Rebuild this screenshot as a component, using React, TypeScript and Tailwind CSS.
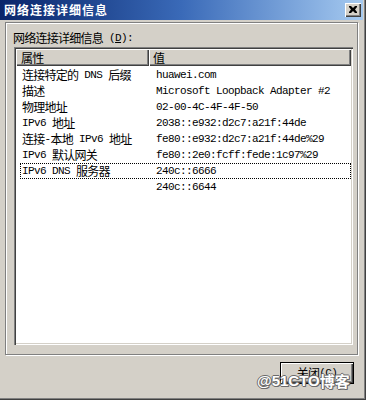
import React from "react";

const ASCII_CLS = "font-['Liberation_Mono',monospace] text-[11px] tracking-[-0.6px] whitespace-pre";
const CJK_CLS = "font-['Noto_Sans_CJK_SC',sans-serif] text-[12px] tracking-[-0.75px] whitespace-pre";

function Mixed({ text }: { text: string }) {
  const parts = text.split(/([\u3000-\u9fff\uff00-\uffef]+)/).filter((p) => p.length > 0);
  return (
    <>
      {parts.map((p, i) =>
        /[\u3000-\u9fff\uff00-\uffef]/.test(p) ? (
          <span key={i} className={CJK_CLS}>
            {p}
          </span>
        ) : (
          <span key={i} className={ASCII_CLS}>
            {p}
          </span>
        )
      )}
    </>
  );
}

const rows: { k: string; v: string; focus?: boolean }[] = [
  { k: "连接特定的 DNS 后缀", v: "huawei.com" },
  { k: "描述", v: "Microsoft Loopback Adapter #2" },
  { k: "物理地址", v: "02-00-4C-4F-4F-50" },
  { k: "IPv6 地址", v: "2038::e932:d2c7:a21f:44de" },
  { k: "连接-本地 IPv6 地址", v: "fe80::e932:d2c7:a21f:44de%29" },
  { k: "IPv6 默认网关", v: "fe80::2e0:fcff:fede:1c97%29" },
  { k: "IPv6 DNS 服务器", v: "240c::6666", focus: true },
  { k: "", v: "240c::6644" },
];

export default function App() {
  return (
    <div className="w-[366px] h-[400px] bg-[#d4d0c8] relative flex flex-col overflow-hidden text-black shadow-[inset_-1px_-1px_#404040,inset_-2px_-2px_#808080]">
      {/* Title bar */}
      <div className="h-[20px] mr-[3px] flex items-center justify-between pl-[4px] pr-[2px] bg-linear-to-r from-[#0a246a] via-[#3a6ab8] to-[#a6caf0]">
        <span className="font-['Noto_Sans_CJK_SC',sans-serif] text-[12px] font-bold tracking-[1px] text-white leading-none">
          网络连接详细信息
        </span>
        <div className="w-[16px] h-[14px] bg-[#d4d0c8] flex items-center justify-center shadow-[inset_1px_1px_#fff,inset_-1px_-1px_#404040,inset_-2px_-2px_#808080]">
          <svg width="8" height="7" viewBox="0 0 8 7" className="mb-[1px]">
            <path d="M0 0h2l2 2 2-2h2v1L6 3.5 8 6v1H6L4 5 2 7H0V6l2-2.5L0 1z" fill="#000" />
          </svg>
        </div>
      </div>

      {/* Etched panel */}
      <div className="ml-[5px] mt-[2px] w-[353px] h-[333px] border border-[#808080] shadow-[inset_1px_1px_#fff,1px_1px_#fff] flex flex-col">
        <div className="pl-[7px] pt-[8px] h-[22px] flex items-start leading-[14px]">
          <Mixed text="网络连接详细信息 " />
          <span className={ASCII_CLS}>(</span>
          <span className={ASCII_CLS + " underline"}>D</span>
          <span className={ASCII_CLS}>):</span>
        </div>
        <div className="ml-[8px] mt-[2px] w-[339px] h-[298px] bg-white p-[2px] shadow-[inset_1px_1px_#808080,inset_2px_2px_#404040,inset_-1px_-1px_#fff,inset_-2px_-2px_#d4d0c8] flex flex-col">
          {/* Header */}
          <div className="h-[17px] flex">
            <div className="w-[133px] h-full bg-[#d4d0c8] pl-[5px] flex items-center shadow-[inset_1px_1px_#fff,inset_-1px_-1px_#404040,inset_-2px_-2px_#808080]">
              <Mixed text="属性" />
            </div>
            <div className="flex-1 h-full bg-[#d4d0c8] pl-[4px] flex items-center shadow-[inset_1px_1px_#fff,inset_-1px_-1px_#404040,inset_-2px_-2px_#808080]">
              <Mixed text="值" />
            </div>
          </div>
          {/* Rows */}
          <div className="mt-[1px] flex flex-col">
            {rows.map((r, i) => (
              <div
                key={i}
                className={
                  r.focus
                    ? "ml-[4px] h-[16px] flex items-center outline-1 outline-dotted outline-black -outline-offset-1"
                    : "ml-[4px] h-[16px] flex items-center"
                }
              >
                <div className="w-[129px] pl-[2px] flex items-center leading-[16px]">
                  <Mixed text={r.k} />
                </div>
                <div className="flex-1 pl-[7px] flex items-center leading-[16px]">
                  <Mixed text={r.v} />
                </div>
              </div>
            ))}
          </div>
        </div>
      </div>

      {/* Button */}
      <div className="mt-[7px] ml-[280px] w-[74px] h-[22px] border border-black bg-[#d4d0c8] flex items-center justify-center shadow-[inset_1px_1px_#fff,inset_-1px_-1px_#404040,inset_-2px_-2px_#808080] leading-none">
        <Mixed text="关闭" />
        <span className={ASCII_CLS}>(</span>
        <span className={ASCII_CLS + " underline"}>C</span>
        <span className={ASCII_CLS}>)</span>
      </div>

      {/* Watermark */}
      <div className="absolute left-[257px] top-[373px] flex items-center leading-none text-white [text-shadow:1px_0_#6a6a6a,-1px_0_#6a6a6a,0_1px_#6a6a6a,0_-1px_#6a6a6a,1px_1px_#6a6a6a]">
        <span className="font-['Liberation_Sans',sans-serif] font-bold text-[15px]">@51CTO</span>
        <span className="font-['Noto_Sans_CJK_SC',sans-serif] font-bold text-[15px]">博客</span>
      </div>
    </div>
  );
}
